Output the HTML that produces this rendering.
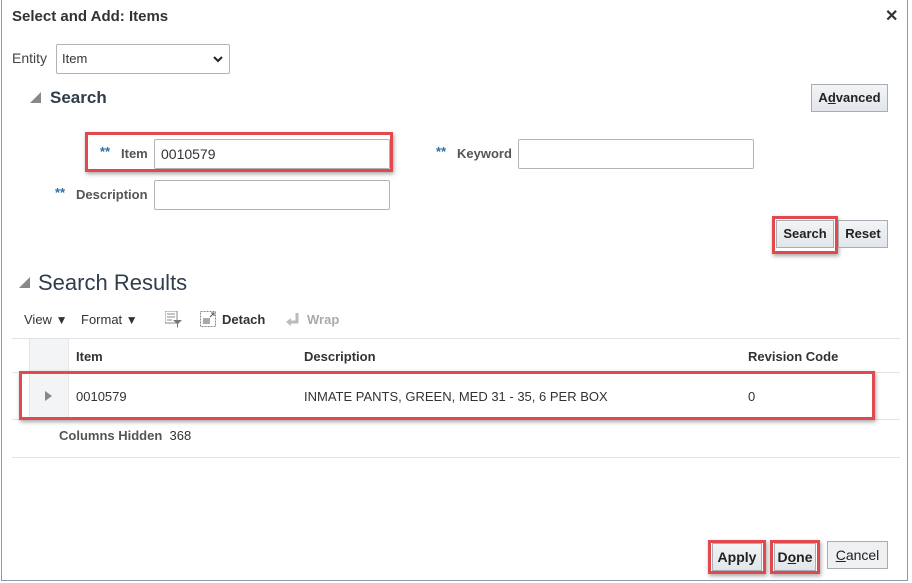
<!DOCTYPE html>
<html><head><style>
*{box-sizing:border-box;margin:0;padding:0}
body{width:912px;height:583px;background:#fff;font-family:"Liberation Sans",Arial,sans-serif;position:relative;overflow:hidden;color:#333}
.a{position:absolute}
.frame{left:1px;top:0;width:907px;height:581px;border:1px solid #8f98ab;border-top:none}
.lbl{font-size:13px;color:#555;font-weight:bold}
.inp{border:1px solid #b3b3b3;border-radius:2px;background:#fff;height:30px;font-size:13px;color:#333;padding:7px 6px}
.btn{border:1px solid #a8adb4;background:linear-gradient(#f2f4f6,#e2e6ea);font-size:13px;font-weight:bold;color:#222;text-align:center;line-height:26px;height:28px}
.red{border:3px solid #e04a4f;box-shadow:1px 2px 4px rgba(0,0,0,.35)}
.star{color:#2a6fa8;font-size:13px;font-weight:bold}
.hl{background:#dfe2e6;height:1px}
</style></head><body>
<div class="a frame"></div>
<div class="a" style="left:12px;top:8px;font-size:15px;font-weight:bold;color:#333">Select and Add: Items</div>
<div class="a" style="left:885px;top:6px;font-size:16px;font-weight:bold;color:#333">✕</div>
<div class="a" style="left:12px;top:50px;font-size:14px;color:#444">Entity</div>
<div class="a inp" style="left:56px;top:44px;width:174px;height:30px;padding:6px 5px">Item<svg class="a" style="right:6px;top:11px" width="10" height="7" viewBox="0 0 10 7"><path d="M1 1l4 4 4-4" stroke="#222" stroke-width="2" fill="none"/></svg></div>
<svg class="a" style="left:30px;top:92px" width="11" height="11"><path d="M11 0V11H0Z" fill="#888"/></svg>
<div class="a" style="left:50px;top:88px;font-size:17px;font-weight:bold;color:#2f3d4c">Search</div>
<div class="a btn" style="left:811px;top:84px;width:77px"><span>A<u>d</u>vanced</span></div>

<div class="a red" style="left:85px;top:132px;width:308px;height:40px"></div>
<div class="a star" style="left:100px;top:144px">**</div>
<div class="a lbl" style="left:121px;top:146px">Item</div>
<div class="a inp" style="left:154px;top:139px;width:236px;height:30px;font-size:14px;padding:6px">0010579</div>
<div class="a star" style="left:55px;top:185px">**</div>
<div class="a lbl" style="left:76px;top:187px">Description</div>
<div class="a inp" style="left:154px;top:180px;width:236px"></div>
<div class="a star" style="left:436px;top:144px">**</div>
<div class="a lbl" style="left:457px;top:146px">Keyword</div>
<div class="a inp" style="left:518px;top:139px;width:236px"></div>

<div class="a red" style="left:772px;top:216px;width:66px;height:38px"></div>
<div class="a btn" style="left:776px;top:220px;width:58px">Search</div>
<div class="a btn" style="left:838px;top:220px;width:50px">Reset</div>

<svg class="a" style="left:19px;top:277px" width="11" height="11"><path d="M11 0V11H0Z" fill="#888"/></svg>
<div class="a" style="left:38px;top:270px;font-size:22px;color:#2f3d4c">Search Results</div>

<div class="a" style="left:24px;top:312px;font-size:13px;color:#333">View <span style="font-size:12px">▼</span></div>
<div class="a" style="left:81px;top:312px;font-size:13px;color:#333">Format <span style="font-size:12px">▼</span></div>
<svg class="a" style="left:165px;top:311px" width="18" height="17"><rect x="0" y="0" width="12" height="12" fill="none" stroke="#888"/><path d="M2 3h8M2 6h8M2 9h5" stroke="#888"/><path d="M8 9h9l-4 4v4l-1-1v-3z" fill="#777"/></svg>
<svg class="a" style="left:200px;top:311px" width="17" height="17"><rect x="0.5" y="0.5" width="15" height="15" fill="none" stroke="#888" stroke-dasharray="2 1"/><rect x="3" y="7" width="7" height="6" fill="#aaa"/><path d="M10 6l4-4M11 2h3v3" stroke="#555" fill="none"/></svg>
<div class="a" style="left:222px;top:312px;font-size:13px;font-weight:bold;color:#333">Detach</div>
<svg class="a" style="left:286px;top:313px" width="14" height="15"><path d="M11 0v9H5" stroke="#bbb" stroke-width="3" fill="none"/><path d="M0 9l5-4v8z" fill="#bbb"/></svg>
<div class="a" style="left:307px;top:312px;font-size:13px;font-weight:bold;color:#aaa">Wrap</div>

<div class="a hl" style="left:12px;top:338px;width:888px"></div>
<div class="a" style="left:29px;top:339px;width:40px;height:80px;background:#f3f4f5;border-left:1px solid #e4e6e9;border-right:1px solid #e4e6e9"></div>
<div class="a" style="left:76px;top:349px;font-size:13px;font-weight:bold;color:#333">Item</div>
<div class="a" style="left:304px;top:349px;font-size:13px;font-weight:bold;color:#333">Description</div>
<div class="a" style="left:748px;top:349px;font-size:13px;font-weight:bold;color:#333">Revision Code</div>
<div class="a hl" style="left:12px;top:372px;width:888px"></div>
<div class="a hl" style="left:12px;top:419px;width:888px"></div>
<div class="a red" style="left:19px;top:371px;width:856px;height:49px"></div>
<svg class="a" style="left:45px;top:391px" width="7" height="10"><path d="M0 0l7 5-7 5z" fill="#888"/></svg>
<div class="a" style="left:76px;top:389px;font-size:13px;color:#333">0010579</div>
<div class="a" style="left:304px;top:389px;font-size:13px;color:#333">INMATE PANTS, GREEN, MED 31 - 35, 6 PER BOX</div>
<div class="a" style="left:748px;top:389px;font-size:13px;color:#333">0</div>
<div class="a" style="left:59px;top:428px;font-size:13px;font-weight:bold;color:#555">Columns Hidden&nbsp; <span style="font-weight:normal;color:#333">368</span></div>
<div class="a hl" style="left:12px;top:457px;width:888px"></div>

<div class="a red" style="left:708px;top:540px;width:58px;height:34px"></div>
<div class="a btn" style="left:712px;top:543px;width:50px;font-size:14px">Apply</div>
<div class="a red" style="left:770px;top:540px;width:50px;height:34px"></div>
<div class="a btn" style="left:774px;top:543px;width:42px;font-size:14px">D<u>o</u>ne</div>
<div class="a btn" style="left:827px;top:541px;width:61px;font-weight:normal;background:#eef0f2;font-size:14px"><u>C</u>ancel</div>
</body></html>
